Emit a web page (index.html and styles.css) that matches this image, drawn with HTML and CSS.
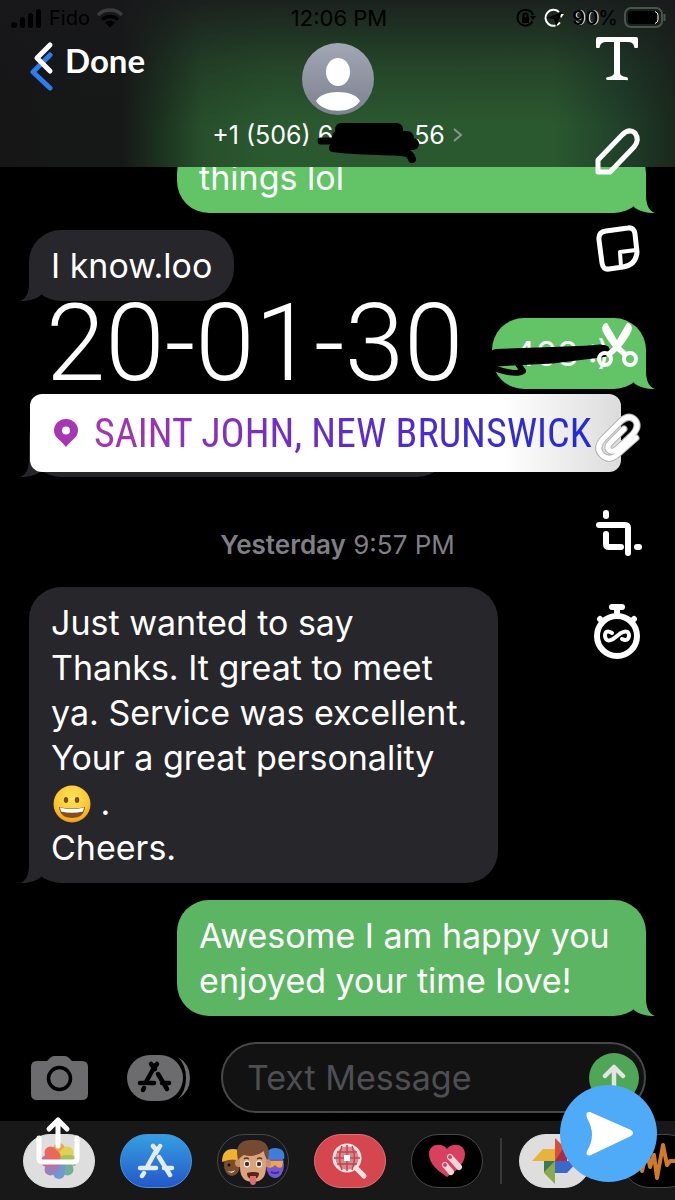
FILE: index.html
```html
<!DOCTYPE html>
<html lang="en">
<head>
    <meta charset="UTF-8">
    <meta name="viewport" content="width=device-width, initial-scale=1.0">
    <title>Messages</title>
    <link rel="stylesheet" href="styles.css">
</head>
<body>
    <div class="screen">
        <header class="header">
            <div class="status">
                <div class="status-left">
                    <svg width="32" height="20" viewBox="0 0 32 20"><g fill="#000"><circle cx="3" cy="17" r="3"/><rect x="9" y="9" width="5" height="11" rx="2.5"/><rect x="17" y="5" width="5" height="15" rx="2.5"/><rect x="25" y="1" width="5" height="19" rx="2.5"/></g></svg>
                    <span>Fido</span>
                    <svg width="28" height="20" viewBox="0 0 28 20" fill="none" stroke-width="3.4"><path d="M2 7a17 17 0 0 1 24 0" stroke="#3c3c3e"/><path d="M6 11.500a12 12 0 0 1 16 0" stroke="#000"/><path d="M9 14.500a8 8 0 0 1 10 0L14 19.500z" fill="#000"/></svg>
                </div>
                <span class="time">12:06 PM</span>
                <div class="status-right">
                    <svg width="20" height="20" viewBox="0 0 20 20" fill="none" stroke="#000" stroke-width="2"><path d="M16.500 13.500A8 8 0 1 1 17 7"/><path d="M14 8h6l-3 4z" fill="#000" stroke="none"/><rect x="6" y="9" width="7" height="6" fill="#000" stroke="none"/><path d="M7.500 9V7.500a2 2 0 0 1 4 0V9"/></svg>
                    <svg class="location" width="20" height="20" viewBox="0 0 20 20" fill="none" stroke="#fff" stroke-width="2"><path d="M16 14.500A8 8 0 1 1 15 4"/><path d="M15 6h5l-3 4z" fill="#fff" stroke="none"/><path d="M2 10l16-6-6 15-2-8z" fill="#000" stroke="none"/></svg>
                    <span class="battery-text"><b>90</b>%</span>
                    <svg width="43" height="21" viewBox="0 0 43 21"><rect x="1" y="1" width="37" height="19" rx="6" fill="none" stroke="#46564a" stroke-width="2"/><rect x="4" y="4" width="30" height="13" rx="3.500" fill="#000"/><path d="M31 4.500q3 1 3 4v4q0 3-3 4" fill="none" stroke="#fff" stroke-width="1"/><path d="M40.500 7v7" stroke="#46564a" stroke-width="2"/></svg>
                </div>
            </div>
            <svg class="avatar" viewBox="0 0 72 72">
                <defs>
                    <linearGradient id="avatarFill" x1="0" y1="0" x2="0" y2="1"><stop offset="0" stop-color="#a3a6b4"/><stop offset="1" stop-color="#7d808d"/></linearGradient>
                </defs>
                <circle cx="36" cy="36" r="36" fill="url(#avatarFill)"/>
                <ellipse cx="36" cy="29" rx="12" ry="14" fill="#fff"/>
                <path d="M14 58C20 46 52 46 58 58C50 71 22 71 14 58z" fill="#fff"/>
            </svg>
            <a class="contact" href="#">
                <span>+1 (506) 6</span>
                <span class="hidden-part"><svg class="scribble" width="112" height="46" viewBox="0 0 112 46" fill="none" stroke="#000" stroke-linecap="round" stroke-linejoin="round"><path d="M26 9H82" stroke-width="12"/><path d="M24 17L92 18" stroke-width="14"/><path d="M6 21L24 21" stroke-width="7"/><path d="M22 24L98 24" stroke-width="12"/><path d="M18 28C46 32 80 30 92 33Q96 35 97 39" stroke-width="8"/></svg></span>
                <span>56</span>
                <svg width="10" height="16" viewBox="0 0 10 16" fill="none" stroke="#8b9590" stroke-width="2"><path d="M1 2l7 6-7 6"/></svg>
            </a>
            <button class="back" type="button">
                <svg width="25" height="50" viewBox="0 0 25 50" fill="none" stroke-width="5" stroke-linecap="round" stroke-linejoin="round"><path d="M20 14L3 31L20 47" stroke="#2f7cf0"/><path d="M20 4L7 17L20 30" stroke="#fff"/></svg>
                <span>Done</span>
            </button>
        </header>

        <main class="messages">
            <p class="bubble sent wide">things lol</p>
            <p class="bubble received">I know.loo</p>
            <div class="bubble sent short">408 :)
                <svg class="stroke" width="130" height="40" viewBox="0 0 130 40" fill="none" stroke="#000" stroke-linecap="round" stroke-linejoin="round"><path d="M4 13L60 11L112 9" stroke-width="12"/><path d="M4 18L60 15L108 9" stroke-width="13"/><path d="M26 22L31 29Q24 34 2 26" stroke-width="6"/></svg>
            </div>
            <div class="bubble received covered"></div>
            <p class="stamp"><b>Yesterday</b> 9:57 PM</p>
            <p class="bubble received wide">Just wanted to say<br>Thanks. It great to meet<br>ya. Service was excellent.<br>Your a great personality<br><svg class="emoji" width="38" height="38" viewBox="0 0 38 38" role="img" aria-label="grinning face"><defs><radialGradient id="face" cx=".5" cy=".35" r=".65"><stop offset="0" stop-color="#ffe45c"/><stop offset=".7" stop-color="#fcc633"/><stop offset="1" stop-color="#f09a1f"/></radialGradient></defs><circle cx="19" cy="19" r="18.500" fill="url(#face)"/><ellipse cx="13" cy="15" rx="2.200" ry="3" fill="#7a4a12"/><ellipse cx="24" cy="15" rx="2.200" ry="3" fill="#7a4a12"/><path d="M6 22q13 3 26 0q-1 11-13 11T6 22z" fill="#85501a"/><path d="M7 22.500q12 3 24 0l-1 4q-11 2.500-22 0z" fill="#fff"/></svg> .<br>Cheers.</p>
            <p class="bubble sent wide">Awesome I am happy you<br>enjoyed your time love!</p>
        </main>

        <form class="compose">
            <button class="camera" type="button" aria-label="Camera">
                <svg width="57" height="44" viewBox="0 0 57 44"><path d="M6 5h10l3-3q2-2 4-2h11q2 0 4 2l3 3h10q6 0 6 6v27q0 6-6 6H6q-6 0-6-6V11q0-6 6-6z" fill="#6c6c6e"/><circle cx="28.500" cy="22.500" r="11" fill="none" stroke="#000" stroke-width="3.500"/></svg>
            </button>
            <button type="button" aria-label="Apps">
                <svg width="63" height="46" viewBox="0 0 63 46"><rect x="0" y="0" width="56" height="46" rx="23" fill="#6c6c6e"/><path d="M51 2q12 7 12 21T51 44q8-8 8-21T51 2z" fill="#6c6c6e"/><g stroke="#000" stroke-width="4.500" stroke-linecap="round"><path d="M28.500 10L19 27M24 9l4 5M30 9L26 14M31 19l9 15M13 28h14M35 28h7M17 33l-1 2"/></g></svg>
            </button>
            <div class="field">
                <input type="text" aria-label="Text Message" placeholder="Text Message">
                <button class="send" type="submit" aria-label="Send">
                    <svg width="24" height="28" viewBox="0 0 24 28" fill="none" stroke="#e4e4e4" stroke-width="4.500" stroke-linecap="round" stroke-linejoin="round"><path d="M12 26V4M3 12l9-9 9 9"/></svg>
                </button>
            </div>
        </form>

        <nav class="apps">
            <button class="app light" type="button" aria-label="Photos">
                <svg width="40" height="40" viewBox="0 0 40 40"><g opacity=".85"><rect x="14" y="2" width="12" height="18" rx="6" fill="#f09a37"/><rect x="14" y="2" width="12" height="18" rx="6" fill="#e2cf3a" transform="rotate(45 20 20)"/><rect x="14" y="2" width="12" height="18" rx="6" fill="#9dbd4b" transform="rotate(90 20 20)"/><rect x="14" y="2" width="12" height="18" rx="6" fill="#62a58d" transform="rotate(135 20 20)"/><rect x="14" y="2" width="12" height="18" rx="6" fill="#5b8fd0" transform="rotate(180 20 20)"/><rect x="14" y="2" width="12" height="18" rx="6" fill="#8d72b4" transform="rotate(225 20 20)"/><rect x="14" y="2" width="12" height="18" rx="6" fill="#c05b8c" transform="rotate(270 20 20)"/><rect x="14" y="2" width="12" height="18" rx="6" fill="#ea5545" transform="rotate(315 20 20)"/></g></svg>
            </button>
            <button class="app store" type="button" aria-label="App Store">
                <svg width="40" height="36" viewBox="0 0 40 36" stroke="#e3ecf5" stroke-width="4.500" stroke-linecap="round"><path d="M21 6L11 24M17 3l4 5M24 3L20 10M23 14l11 18M4 25h16M28 25h8M8 30l-2 3"/></svg>
            </button>
            <button class="app dark" type="button" aria-label="Memoji">
                <svg width="66" height="48" viewBox="0 0 66 48">
                    <ellipse cx="12" cy="28" rx="8" ry="11" fill="#7b4d2c"/><path d="M2 25q0-13 11-13t9 13q-9-5-20 0z" fill="#efb42f"/>
                    <circle cx="9" cy="28" r="1.500" fill="#1b0f08"/><path d="M7 34q5 2 8-1-2 5-8 1z" fill="#fff"/>
                    <ellipse cx="55" cy="28" rx="9" ry="13" fill="#7557d6"/><path d="M46 22q0-12 10-11t8 11z" fill="#3d7fd8"/><path d="M46 24h17l-1 6q-4 2-7-2-3 4-8 2z" fill="#f0a742"/><path d="M51 35q4 2 8 0" stroke="#432c94" stroke-width="2" fill="none"/>
                    <circle cx="19" cy="26" r="4" fill="#c98f6a"/><circle cx="47" cy="26" r="4" fill="#c98f6a"/>
                    <path d="M20 18q0-8 13-8t13 8v12q0 15-13 15T20 30z" fill="#d9a37c"/>
                    <path d="M18 23Q13 2 33 3q19-1 15 20-4-4-4-9-9 7-20 4-4 2-6 5z" fill="#754a30"/>
                    <path d="M24 22q2-2 5 0M37 22q3-2 5 0" stroke="#58351f" stroke-width="1.500" fill="none"/>
                    <ellipse cx="27" cy="27" rx="3" ry="3.500" fill="#fff"/><ellipse cx="39" cy="27" rx="3" ry="3.500" fill="#fff"/><circle cx="27" cy="27" r="2.200" fill="#4b2d1c"/><circle cx="39" cy="27" r="2.200" fill="#4b2d1c"/>
                    <path d="M27 36q6-2 12 0 0 6-6 6t-6-6z" fill="#59201c"/><path d="M30 39h6v5q0 4-3 4t-3-4z" fill="#dc6d70"/>
                </svg>
            </button>
            <button class="app red" type="button" aria-label="Images">
                <svg width="38" height="38" viewBox="0 0 38 38" fill="none" stroke="#efe4e4"><circle cx="16" cy="16" r="13" fill="#d3898e" stroke-width="3"/><path d="M16 3v26M3 16h26M6 10h20M6 22h20M11 4q-5 12 0 24M21 4q5 12 0 24" stroke="#c9434e" stroke-width="1.500"/><rect x="13" y="13" width="6" height="6" fill="#fff" stroke="none"/><path d="M25 26l8 8" stroke-width="5" stroke-linecap="round"/></svg>
            </button>
            <button class="app black" type="button" aria-label="Digital Touch">
                <svg width="38" height="34" viewBox="0 0 38 34"><path d="M19 33C12 28 1 21 1 10C1 0 14-2 19 5C24-2 37 0 37 10C37 21 26 28 19 33z" fill="#d9405f"/><g stroke="#eed6da" stroke-width="6" stroke-linecap="round"><path d="M17 21l6 7M22 13l9 10"/></g><circle cx="17" cy="21" r="2" fill="#d9405f"/><circle cx="22" cy="13" r="2" fill="#d9405f"/></svg>
            </button>
            <span class="divider"></span>
            <button class="app light" type="button" aria-label="Google Photos">
                <svg width="46" height="46" viewBox="0 0 46 46"><path d="M23 0l12 12v11H23z" fill="#d4503c"/><path d="M23 23l7-11h5v11z" fill="#a72c4c"/><path d="M0 23l11-12h12v12z" fill="#e8b23c"/><path d="M12 23h11v23L12 35z" fill="#8aab4b"/><path d="M12 23h11L12 34z" fill="#3d7a50"/><path d="M23 23h23L35 35H23z" fill="#3e68c8"/></svg>
            </button>
            <button class="app black last" type="button" aria-label="Audio">
                <svg width="52" height="40" viewBox="0 0 52 40" fill="none" stroke="#d27a2c" stroke-width="4" stroke-linecap="round" stroke-linejoin="round"><path d="M2 22l4-6 4 14 5-20 3 16 4-12 3 23 6-33 4 20 3-4h4"/></svg>
            </button>
        </nav>

        <p class="date">20-01-30</p>
        <div class="place">
            <svg width="24" height="28" viewBox="0 0 24 28"><path d="M12 28C8 22 0 19 0 11.500a12 11.500 0 0 1 24 0C24 19 16 22 12 28z" fill="#a636b4"/><circle cx="12" cy="11.500" r="4" fill="#fff"/></svg>
            <span>SAINT JOHN, NEW BRUNSWICK</span>
        </div>

        <aside class="tools">
            <button type="button" aria-label="Text">
                <svg viewBox="0 0 48 48"><path d="M5 3H43q2 0 2 2v8q0 1-1 1h-2q-1 0-1-2-1-4-6-4h-8v31q0 3 6 4 2 0 2 2t-2 1H15q-2 0-2-1.500t2-1.500q6-1 6-4V8h-8q-5 0-6 4 0 2-1 2H4q-1 0-1-1V5q0-2 2-2z" fill="#fff"/></svg>
            </button>
            <button type="button" aria-label="Draw">
                <svg viewBox="0 0 48 48" fill="none" stroke="#fff" stroke-width="5" stroke-linejoin="round"><path d="M5 43V31L29 6Q36 -1 42 4Q47 11 41 18L17 43z"/></svg>
            </button>
            <button type="button" aria-label="Stickers">
                <svg viewBox="0 0 48 48" fill="none" stroke="#fff" stroke-width="5" stroke-linejoin="round"><path d="M13 7L35 4Q41 3 42 10L44 28Q43 41 30 43L16 45Q10 46 9 39L6 16Q5 8 13 7z"/><path d="M28 43L27 28L43 26" stroke-width="4"/></svg>
            </button>
            <button type="button" aria-label="Cut">
                <svg viewBox="0 0 48 48"><g fill="none" stroke="#fff"><circle cx="12" cy="40" r="6" stroke-width="4"/><circle cx="37" cy="40" r="6" stroke-width="4"/></g><path d="M9 9Q10 4 14 4L24 21L34 4Q38 4 39 9Q39 14 28 28L36 35L32 39L24 32L16 39L12 35L20 28Q9 14 9 9z" fill="#fff"/></svg>
            </button>
            <button type="button" aria-label="Attach">
                <svg viewBox="0 0 48 48" fill="none" stroke-linecap="round" stroke-linejoin="round"><path d="M43 24L25 40Q16 48 9 41Q2 34 10 25L28 7Q36 0 42 6Q47 12 40 20L24 35Q19 39 16 36Q13 33 18 28L31 15" stroke="#b4b4b4" stroke-width="7"/><path d="M43 24L25 40Q16 48 9 41Q2 34 10 25L28 7Q36 0 42 6Q47 12 40 20L24 35Q19 39 16 36Q13 33 18 28L31 15" stroke="#fff" stroke-width="5"/></svg>
            </button>
            <button type="button" aria-label="Crop">
                <svg viewBox="0 0 48 48" fill="none" stroke="#fff" stroke-width="6" stroke-linecap="round" stroke-linejoin="round"><path d="M13 4v3M6 16h26q3 0 3 3v25M13 25v10q0 3 3 3h12M44 38h2"/></svg>
            </button>
            <button type="button" aria-label="Timer">
                <svg class="timer" viewBox="0 0 48 56" fill="none" stroke="#fff" stroke-linecap="round"><circle cx="24" cy="32" r="20" stroke-width="6"/><path d="M19 3h10M24 5v6M7 15l2 2M41 15l-2 2" stroke-width="6"/><path d="M19 29Q12 25 12 32Q13 39 20 35L28 29Q36 25 36 32Q35 38 29 35" stroke-width="4"/></svg>
            </button>
        </aside>

        <button class="share" type="button" aria-label="Share">
            <svg width="46" height="50" viewBox="0 0 46 50" fill="none" stroke="#fff" stroke-width="5" stroke-linecap="round" stroke-linejoin="round"><path d="M4 22v20q0 4 4 4h30q4 0 4-4V22M23 30V4M14 13l9-9 9 9"/></svg>
        </button>
        <button class="post" type="button" aria-label="Send snap">
            <svg width="50" height="46" viewBox="0 0 50 46"><path d="M6 1L47 19Q51 22 47 25L7 44Q1 46 3 40Q13 24 3 7Q1 0 6 1z" fill="#fff"/></svg>
        </button>
    </div>
</body>
</html>
```

FILE: styles.css
```css
* {
    box-sizing: border-box;
}
body {
    margin: 0;
    background: #000;
    color: #fff;
    font-family: Inter, Roboto, sans-serif;
}
p {
    margin: 0;
}
button {
    padding: 0;
    border: none;
    background: none;
    color: inherit;
    cursor: pointer;
}
svg {
    display: block;
}
.screen {
    position: relative;
    display: flex;
    flex-direction: column;
    min-height: 100vh;
    overflow: hidden;
}

/* Header */
.header {
    position: relative;
    z-index: 1;
    display: flex;
    flex-direction: column;
    align-items: center;
    padding-bottom: 12px;
    background:
        linear-gradient(180deg, rgba(24, 24, 27, 0.85) 0%, rgba(24, 24, 27, 0.3) 40%, rgba(24, 24, 27, 0) 75%),
        linear-gradient(90deg, #161617 0%, #161817 18%, #1c331f 24%, #274f2b 30%, #2a592f 40%, #2b592f 82%, #20402a 92%, #1a281c 100%);
}
.status {
    display: grid;
    grid-template-columns: 1fr auto 1fr;
    align-items: center;
    width: 100%;
    height: 35px;
    padding: 0 8px 0 11px;
    color: #000;
    font-size: 20px;
}
.status-left, .status-right {
    display: flex;
    align-items: center;
    gap: 6px;
}
.status-right {
    justify-content: flex-end;
}
.location {
    margin: 0 2px;
}
.time {
    font-size: 22px;
}
.battery-text b {
    font-weight: 600;
    text-shadow: 1px 0 0 #fff;
}
.avatar {
    width: 72px;
    height: 72px;
    margin-top: 8px;
}
.contact {
    display: flex;
    align-items: center;
    color: #fff;
    font-size: 25px;
    line-height: 40px;
    text-decoration: none;
}
.contact > svg {
    margin-left: 8px;
}
.hidden-part {
    position: relative;
    width: 81px;
    height: 40px;
}
.scribble {
    position: absolute;
    left: -18px;
    top: 5px;
}
.back {
    position: absolute;
    left: 30px;
    top: 41px;
    display: flex;
    gap: 10px;
    font-family: Lato, sans-serif;
    font-size: 33px;
    font-weight: bold;
    line-height: 38px;
}

/* Conversation */
.messages {
    display: flex;
    flex-direction: column;
    align-items: flex-start;
    gap: 17px;
    margin-top: -25px;
    padding: 0 29px;
    font-size: 34px;
    line-height: 45px;
}
.bubble {
    position: relative;
    min-height: 71px;
    padding: 13px 22px;
    border-radius: 32px;
}
.bubble::before {
    content: "";
    position: absolute;
    left: -9px;
    bottom: 0;
    width: 30px;
    height: 40px;
    background: inherit;
    clip-path: path("M9 0V22C9 32 6 38 0 40C9 40 16 38 21 34L30 20V0Z");
}
.received {
    background: #27262b;
}
.sent {
    align-self: flex-end;
    background: #62c466;
}
.sent::before {
    left: auto;
    right: -9px;
    transform: scaleX(-1);
}
.sent:last-child {
    background: #5cb562;
}
.wide {
    width: 76%;
}
.short {
    width: 25%;
}
.covered {
    width: 68%;
}
.stroke {
    position: absolute;
    left: 0;
    top: 24px;
}
.stamp {
    align-self: center;
    margin: 28px 0 3px;
    color: #7f7f85;
    font-size: 26px;
}
.stamp b {
    font-weight: 600;
}
.emoji {
    display: inline-block;
    margin-left: 2px;
    vertical-align: -8px;
}

/* Compose row */
.compose {
    display: flex;
    align-items: center;
    gap: 31px;
    margin-top: auto;
    padding: 26px 29px 8px 31px;
}
.camera {
    margin-right: 8px;
}
.field {
    display: flex;
    flex: 1;
    align-items: center;
    min-width: 0;
    height: 71px;
    padding: 0 5px 0 22px;
    border: 2px solid #48484b;
    border-radius: 36px;
    background: #121212;
}
.field input {
    flex: 1;
    min-width: 0;
    border: none;
    outline: none;
    background: none;
    color: #fff;
    font: 34px Inter, Roboto, sans-serif;
}
.field input::placeholder {
    color: #4e4e53;
    opacity: 1;
}
.send {
    display: grid;
    place-items: center;
    width: 50px;
    height: 50px;
    border-radius: 50%;
    background: #4fa657;
}

/* App strip */
.apps {
    display: flex;
    align-items: center;
    gap: 25px;
    height: 79px;
    padding-left: 23px;
    background: #181818;
}
.app {
    display: grid;
    place-items: center;
    flex-shrink: 0;
    width: 72px;
    height: 54px;
    border: 1px solid #48484b;
    border-radius: 30px;
}
.light {
    border-color: #ddd;
    background: #dedede;
}
.store {
    border-color: #4a93d8;
    background: linear-gradient(#359fe0, #2458c9);
}
.dark {
    background: #17181b;
}
.red {
    border-color: #e0707a;
    background: #d5464f;
}
.black {
    background: #000;
}
.divider {
    flex-shrink: 0;
    width: 2px;
    height: 46px;
    margin: 0 -8px;
    background: #38383b;
}
.last {
    margin-left: 6px;
}

/* Stickers and editing tools over the chat */
.date {
    position: absolute;
    left: 46px;
    top: 304px;
    font-family: Roboto, sans-serif;
    font-size: 107px;
    font-weight: 300;
    line-height: 80px;
}
.place {
    position: absolute;
    left: 30px;
    top: 394px;
    display: flex;
    align-items: center;
    gap: 16px;
    height: 78px;
    padding: 0 29px 0 24px;
    border-radius: 12px;
    background: linear-gradient(90deg, #fff 80%, #dcdcdc);
    font-family: "Liberation Sans Narrow", "Roboto Condensed", Roboto, sans-serif;
    font-size: 40px;
    white-space: nowrap;
}
.place span {
    background: linear-gradient(90deg, #a636b0, #5c2cc8 55%, #1f2bd6);
    background-clip: text;
    -webkit-background-clip: text;
    color: transparent;
}
.tools {
    position: absolute;
    z-index: 2;
    right: 34px;
    top: 34px;
    display: flex;
    flex-direction: column;
    gap: 47px;
}
.tools button {
    width: 48px;
    height: 48px;
}
.tools svg {
    width: 100%;
    height: 100%;
    overflow: visible;
}
.tools .timer {
    height: 56px;
}
.share {
    position: absolute;
    left: 35px;
    bottom: 34px;
}
.post {
    position: absolute;
    right: 18px;
    bottom: 18px;
    display: grid;
    place-items: center;
    width: 97px;
    height: 97px;
    border-radius: 50%;
    background: #4faaf8;
}
```
